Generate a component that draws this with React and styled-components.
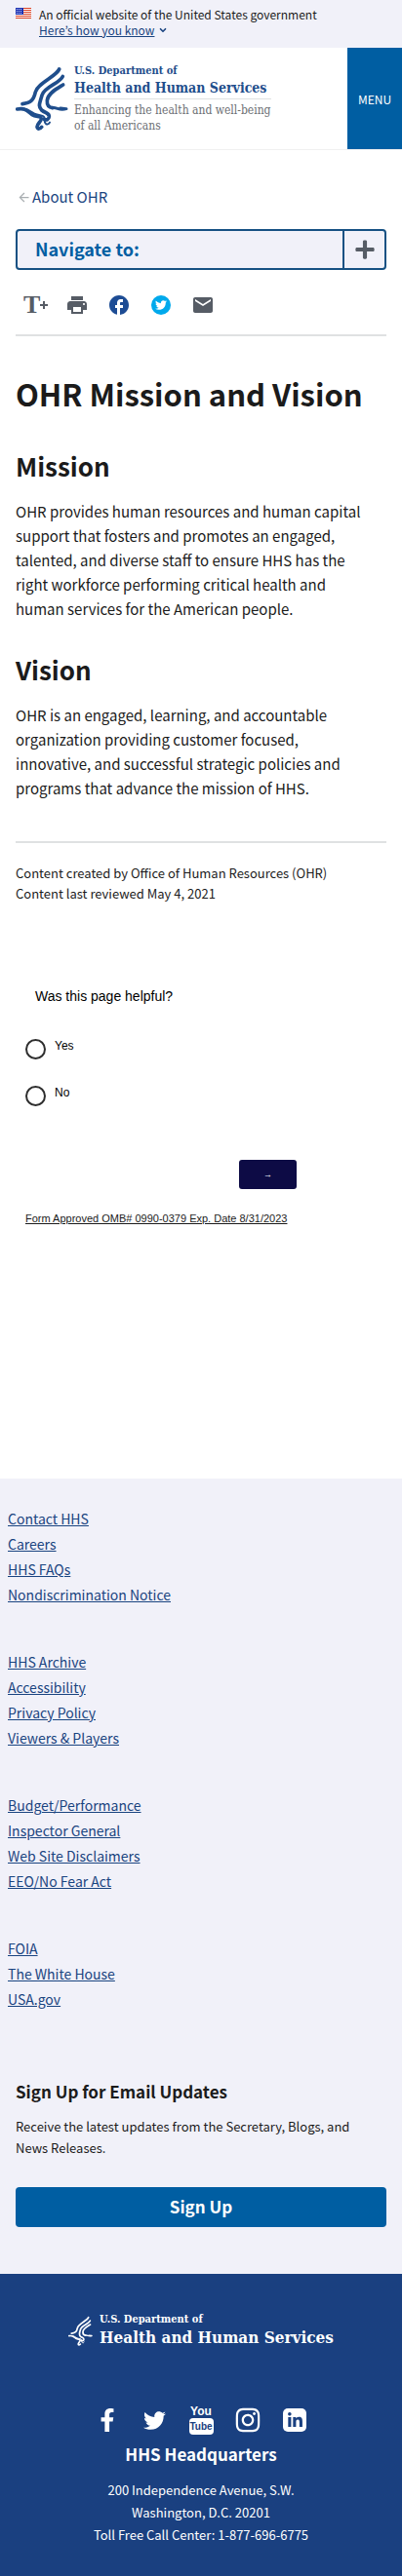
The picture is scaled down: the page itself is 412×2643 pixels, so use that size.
import React from "react";
import styled, { createGlobalStyle } from "styled-components";
import { FaFacebookF, FaTwitter, FaInstagram, FaLinkedinIn, FaPlus } from "react-icons/fa";
import { MdArrowBack, MdEmail, MdFacebook, MdPrint } from "react-icons/md";
import { ChevronDown } from "lucide-react";

const sans = '"Noto Sans CJK JP", "Noto Sans", sans-serif';
const serif = '"DejaVu Serif Condensed", "DejaVu Serif", serif';
const arial = 'Arial, "Liberation Sans", sans-serif';
const color = {
  ink: "#1b1b1b",
  link: "#1a4480",
  primary: "#005ea2",
  navy: "#1a4080",
  pale: "#f1f1f9",
  rule: "#dfe1e2",
  icon: "#565c65",
};

const GlobalStyle = createGlobalStyle`
  *, *::before, *::after { box-sizing: border-box; }
  body { margin: 0; background: #fff; color: ${color.ink}; font-family: ${sans}; }
  h1, h2, h3, p, ul { margin: 0; padding: 0; }
  ul { list-style: none; }
  button { border: 0; padding: 0; font-family: inherit; cursor: pointer; }
  svg { display: block; flex: none; }
`;

const Banner = styled.section`
  display: flex;
  gap: 8px;
  padding: 7px 16px 10px;
  background: ${color.pale};
  font-size: 12px;
  line-height: 16px;
`;
const Flag = styled.svg`
  width: 16px;
  height: 11px;
  margin-top: 1px;
`;
const BannerToggle = styled.button`
  display: flex;
  align-items: center;
  gap: 4px;
  background: none;
  color: ${color.link};
  font-size: 12px;
  line-height: 16px;
  span { text-decoration: underline; text-underline-offset: 1px; }
`;

const Header = styled.header`
  display: flex;
  justify-content: space-between;
  border-bottom: 1px solid #f0f0f0;
`;
const Brand = styled.a`
  display: flex;
  gap: ${(p) => (p.$footer ? 7 : 6)}px;
  padding: ${(p) => (p.$footer ? "0" : "17px 0 16px 16px")};
  color: ${(p) => (p.$footer ? "#fff" : "#1f4e8c")};
  font-family: ${serif};
  font-weight: 700;
  text-align: left;
  text-decoration: none;
`;
const Emblem = styled.svg`
  width: ${(p) => (p.$small ? 25 : 54)}px;
  height: ${(p) => (p.$small ? 32 : 66)}px;
  margin-top: 3px;
`;
const BrandTop = styled.span`
  display: block;
  font-size: 11px;
  line-height: 14px;
`;
const BrandName = styled.span`
  display: block;
  font-size: ${(p) => (p.$footer ? 17 : 14)}px;
  line-height: ${(p) => (p.$footer ? 22 : 20)}px;
`;
const Tagline = styled.span`
  display: block;
  margin-top: 1px;
  padding-top: 3px;
  border-top: 1px solid ${color.rule};
  color: #6b6e73;
  font-size: 12px;
  font-weight: 400;
  line-height: 16px;
`;
const MenuButton = styled.button`
  width: 56px;
  background: ${color.primary};
  color: #fff;
  font-size: 12px;
`;

const Main = styled.main`
  padding: 36px 16px 0;
`;
const Back = styled.a`
  display: flex;
  align-items: center;
  gap: 1px;
  padding-left: 1px;
  color: ${color.link};
  font-size: 15px;
  line-height: 24px;
  text-decoration: none;
  svg { color: #a9aeb1; }
`;
const NavToggle = styled.button`
  display: flex;
  width: 100%;
  height: 42px;
  margin-top: 21px;
  border: 2px solid #165183;
  border-radius: 4px;
  background: ${color.pale};
  color: ${color.primary};
  font-size: 18px;
  font-weight: 700;
  text-align: left;
  line-height: 36px;
`;
const NavLabel = styled.span`
  flex: 1;
  padding-left: 18px;
`;
const NavIcon = styled.span`
  display: grid;
  place-items: center;
  align-self: stretch;
  width: 43px;
  border-left: 2px solid #165183;
  color: ${color.icon};
`;
const ShareBar = styled.div`
  display: flex;
  align-items: center;
  gap: 19px;
  padding: 24px 8px 18px;
  border-bottom: 2px solid ${color.rule};
`;
const ShareButton = styled.button`
  display: grid;
  place-items: center;
  width: 24px;
  height: 24px;
  background: none;
  color: ${(p) => p.$tint || color.icon};
`;
const TextSize = styled.span`
  display: flex;
  align-items: center;
  font-family: "Liberation Serif", serif;
  font-size: 26px;
  font-weight: 700;
  line-height: 24px;
`;
const Disc = styled.span`
  display: grid;
  place-items: center;
  width: 20px;
  height: 20px;
  border-radius: 50%;
  background: #00a9ec;
  color: #fff;
`;

const Title = styled.h1`
  margin-top: 41px;
  font-size: 31px;
  line-height: 36px;
`;
const SectionTitle = styled.h2`
  margin-top: ${(p) => (p.$first ? 40 : 34)}px;
  font-size: 26px;
  line-height: 32px;
`;
const Paragraph = styled.p`
  margin-top: 18px;
  padding-right: 16px;
  font-size: 15px;
  line-height: 25px;
`;
const Meta = styled.div`
  margin-top: 42px;
  padding-top: 20px;
  border-top: 2px solid ${color.rule};
  font-size: 13px;
  line-height: 21px;
`;

const Survey = styled.form`
  margin-top: 85px;
  padding: 0 92px 259px 10px;
  font-family: ${arial};
  color: #000;
`;
const Choices = styled.fieldset`
  display: grid;
  gap: 27px;
  margin: 0;
  padding: 0;
  border: 0;
`;
const Question = styled.legend`
  margin-bottom: 34px;
  padding: 0 0 0 10px;
  font-size: 14px;
  line-height: 20px;
`;
const Choice = styled.label`
  display: flex;
  gap: 9px;
  font-size: 12px;
  line-height: 14px;
`;
const Radio = styled.input`
  appearance: none;
  width: 21px;
  height: 21px;
  margin: 0;
  border: 2px solid #2e2e2e;
  border-radius: 50%;
  &:checked { background: #2e2e2e; }
`;
const NextButton = styled.button`
  display: block;
  width: 59px;
  height: 30px;
  margin: 55px 0 0 auto;
  border-radius: 3px;
  background: #0d0b45;
  color: #fff;
  font-size: 9px;
`;
const FormNote = styled.a`
  display: block;
  margin-top: 22px;
  color: #1b1b1b;
  font-size: 11px;
  line-height: 16px;
  white-space: nowrap;
`;

const LinksArea = styled.nav`
  display: grid;
  gap: 43px;
  padding: 28px 8px 70px;
  background: ${color.pale};
`;
const FooterItem = styled.li`
  height: 26px;
  font-size: 14px;
  line-height: 26px;
`;
const FooterLink = styled.a`
  color: ${color.link};
  text-underline-offset: 1px;
`;
const SignUp = styled.section`
  padding: 0 16px 48px;
  background: ${color.pale};
`;
const SignUpTitle = styled.h3`
  font-size: 17px;
  line-height: 24px;
`;
const SignUpText = styled.p`
  margin: 13px 0 29px;
  padding-right: 16px;
  font-size: 13px;
  line-height: 22px;
`;
const SignUpButton = styled.button`
  display: block;
  width: 100%;
  height: 41px;
  padding-bottom: 2px;
  border-radius: 4px;
  background: ${color.primary};
  color: #fff;
  font-size: 17px;
  font-weight: 700;
`;

const Identifier = styled.div`
  display: flex;
  flex-direction: column;
  align-items: center;
  padding: 40px 16px 32px;
  background: ${color.navy};
  color: #fff;
  text-align: center;
`;
const Social = styled.ul`
  display: flex;
  gap: 18px;
  margin-top: 59px;
`;
const SocialLink = styled.a`
  display: grid;
  place-items: center;
  width: 30px;
  height: 30px;
  color: #fff;
  text-decoration: none;
`;
const TubeLogo = styled.span`
  display: grid;
  justify-items: center;
  font-family: "Liberation Sans Narrow", "Liberation Sans", sans-serif;
  font-size: 12px;
  font-weight: 700;
  line-height: 13px;
`;
const TubeScreen = styled.span`
  width: 25px;
  height: 17px;
  border-radius: 4px;
  background: #fff;
  color: ${color.navy};
  font-size: 10px;
  line-height: 17px;
`;
const InTile = styled.span`
  display: grid;
  place-items: center;
  width: 24px;
  height: 24px;
  border-radius: 5px;
  background: #fff;
  color: ${color.navy};
`;
const Headquarters = styled.h3`
  margin-top: 8px;
  font-size: 17px;
  line-height: 24px;
`;
const Address = styled.address`
  margin-top: 13px;
  font-size: 13px;
  font-style: normal;
  line-height: 23px;
`;

function UsFlag() {
  return (
    <Flag viewBox="0 0 16 11" aria-label="U.S. flag">
      <rect width="16" height="11" fill="#fff" />
      {[0, 2, 4, 6, 8, 10].map((y) => (
        <rect key={y} y={y} width="16" height="1" fill="#db3e1f" />
      ))}
      <rect width="8" height="7" fill="#1e33b1" />
      {[1, 3, 5].map((y) =>
        [1, 3, 5].map((x) => <rect key={`${x}-${y}`} x={x} y={y} width="1" height="1" fill="#cdd6ff" />)
      )}
    </Flag>
  );
}

function Eagle({ small }) {
  return (
    <Emblem $small={small} viewBox="0 0 162 198" fill="none" stroke="currentColor" strokeWidth="11" strokeLinecap="round" strokeLinejoin="round" aria-hidden="true">
      <path d="M134 6C126 28 68 48 61 76C55 103 46 109 21 113" />
      <path d="M145 28C136 50 88 60 81 86C74 112 68 118 80 132C92 142 104 140 103 152C102 161 95 164 88 160" />
      <path d="M146 54C128 65 99 80 97 102C96 116 103 124 114 125" />
      <path d="M112 125C128 122 132 135 156 128L138 126" strokeWidth="9" />
      <path d="M5 129C30 124 36 135 51 146C63 154 78 149 79 158C80 166 66 174 66 183C68 192 76 190 80 184" />
      <path d="M17 128C36 125 47 138 58 143C72 150 84 146 88 154C90 162 86 170 94 175C99 177 103 174 105 170" strokeWidth="6" />
    </Emblem>
  );
}

const linkGroups = [
  ["Contact HHS", "Careers", "HHS FAQs", "Nondiscrimination Notice"],
  ["HHS Archive", "Accessibility", "Privacy Policy", "Viewers & Players"],
  ["Budget/Performance", "Inspector General", "Web Site Disclaimers", "EEO/No Fear Act"],
  ["FOIA", "The White House", "USA.gov"],
];

const socialLinks = [
  { name: "Facebook", icon: <FaFacebookF size={24} /> },
  { name: "Twitter", icon: <FaTwitter size={23} /> },
  { name: "YouTube", icon: <TubeLogo>You<TubeScreen>Tube</TubeScreen></TubeLogo> },
  { name: "Instagram", icon: <FaInstagram size={28} /> },
  { name: "LinkedIn", icon: <InTile><FaLinkedinIn size={17} /></InTile> },
];

export default function App() {
  return (
    <>
      <GlobalStyle />
      <Banner>
        <UsFlag />
        <div>
          <p>An official website of the United States government</p>
          <BannerToggle type="button">
            <span>Here’s how you know</span>
            <ChevronDown size={10} strokeWidth={4} />
          </BannerToggle>
        </div>
      </Banner>
      <Header>
        <Brand href="#home">
          <Eagle />
          <span>
            <BrandTop>U.S. Department of</BrandTop>
            <BrandName>Health and Human Services</BrandName>
            <Tagline>Enhancing the health and well-being<br />of all Americans</Tagline>
          </span>
        </Brand>
        <MenuButton type="button">MENU</MenuButton>
      </Header>

      <Main>
        <Back href="#about"><MdArrowBack size={15} />About OHR</Back>
        <NavToggle type="button">
          <NavLabel>Navigate to:</NavLabel>
          <NavIcon><FaPlus size={22} /></NavIcon>
        </NavToggle>
        <ShareBar>
          <ShareButton type="button" aria-label="Text resize">
            <TextSize>
              T
              <svg width="8" height="8" viewBox="0 0 8 8" stroke="currentColor" strokeWidth="2"><path d="M4 0V8M0 4H8" /></svg>
            </TextSize>
          </ShareButton>
          <ShareButton type="button" aria-label="Print"><MdPrint size={24} /></ShareButton>
          <ShareButton type="button" aria-label="Share on Facebook" $tint="#1d4c94"><MdFacebook size={24} /></ShareButton>
          <ShareButton type="button" aria-label="Share on Twitter"><Disc><FaTwitter size={12} /></Disc></ShareButton>
          <ShareButton type="button" aria-label="Share by email"><MdEmail size={24} /></ShareButton>
        </ShareBar>

        <Title>OHR Mission and Vision</Title>
        <SectionTitle $first>Mission</SectionTitle>
        <Paragraph>
          OHR provides human resources and human capital support that fosters and promotes an engaged,
          talented, and diverse staff to ensure HHS has the right workforce performing critical health and
          human services for the American people.
        </Paragraph>
        <SectionTitle>Vision</SectionTitle>
        <Paragraph>
          OHR is an engaged, learning, and accountable organization providing customer focused,
          innovative, and successful strategic policies and programs that advance the mission of HHS.
        </Paragraph>
        <Meta>
          <p>Content created by Office of Human Resources (OHR)</p>
          <p>Content last reviewed May 4, 2021</p>
        </Meta>

        <Survey>
          <Choices>
            <Question>Was this page helpful?</Question>
            <Choice><Radio type="radio" name="helpful" value="yes" />Yes</Choice>
            <Choice><Radio type="radio" name="helpful" value="no" />No</Choice>
          </Choices>
          <NextButton type="button">→</NextButton>
          <FormNote href="#omb">Form Approved OMB# 0990-0379 Exp. Date 8/31/2023</FormNote>
        </Survey>
      </Main>

      <footer>
        <LinksArea>
          {linkGroups.map((group) => (
            <ul key={group[0]}>
              {group.map((label) => (
                <FooterItem key={label}><FooterLink href="#link">{label}</FooterLink></FooterItem>
              ))}
            </ul>
          ))}
        </LinksArea>
        <SignUp>
          <SignUpTitle>Sign Up for Email Updates</SignUpTitle>
          <SignUpText>Receive the latest updates from the Secretary, Blogs, and News Releases.</SignUpText>
          <SignUpButton type="button">Sign Up</SignUpButton>
        </SignUp>
        <Identifier>
          <Brand href="#home" $footer>
            <Eagle small />
            <span>
              <BrandTop>U.S. Department of</BrandTop>
              <BrandName $footer>Health and Human Services</BrandName>
            </span>
          </Brand>
          <Social>
            {socialLinks.map(({ name, icon }) => (
              <li key={name}><SocialLink href="#social" aria-label={name}>{icon}</SocialLink></li>
            ))}
          </Social>
          <Headquarters>HHS Headquarters</Headquarters>
          <Address>
            200 Independence Avenue, S.W.<br />
            Washington, D.C. 20201<br />
            Toll Free Call Center: 1-877-696-6775
          </Address>
        </Identifier>
      </footer>
    </>
  );
}
